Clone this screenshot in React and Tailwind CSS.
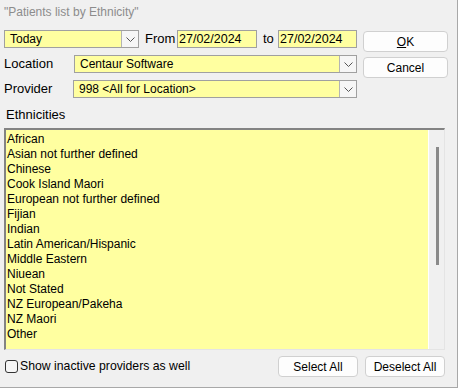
import React from 'react';

const ethnicities = [
  'African',
  'Asian not further defined',
  'Chinese',
  'Cook Island Maori',
  'European not further defined',
  'Fijian',
  'Indian',
  'Latin American/Hispanic',
  'Middle Eastern',
  'Niuean',
  'Not Stated',
  'NZ European/Pakeha',
  'NZ Maori',
  'Other',
];

const Chevron = () => (
  <svg width="9" height="5" viewBox="0 0 9 5" fill="none">
    <path d="M0.5 0.5 L4.5 4.5 L8.5 0.5" stroke="#555" strokeWidth="1" />
  </svg>
);

const Combo = ({ value, className }) => (
  <div className={`flex h-[18px] border border-[#a0a0a0] bg-[#ffffa0] ${className}`}>
    <div className="flex-1 flex items-center pl-[5px] text-[12px] text-black truncate">{value}</div>
    <div className="w-[17px] flex items-center justify-center border-l border-[#b4b4b4] bg-[#f6f6f6]">
      <Chevron />
    </div>
  </div>
);

const DateBox = ({ value, className }) => (
  <div className={`h-[18px] border border-[#a0a0a0] bg-[#ffffa0] flex items-center pl-[1px] text-[12.5px] text-black ${className}`}>
    {value}
  </div>
);

const Button = ({ children, className }) => (
  <button className={`h-[21px] rounded-[4px] border border-[#d0d0d0] bg-[#fdfdfd] text-[12px] text-black flex items-center justify-center ${className}`}>
    {children}
  </button>
);

export default function App() {
  return (
    <div className="w-[458px] h-[388px] bg-[#f0f0f0] border-r border-b border-[#a8a8a8] font-['Liberation_Sans',Arial,sans-serif] text-black flex flex-col">
      <div className="pl-[4px] pt-[4px] leading-[16px] text-[12px] text-[#8c8c8c]">"Patients list by Ethnicity"</div>

      <div className="flex mt-[10px] pl-[4px]">
        <div className="w-[353px] flex flex-col">
          <div className="flex items-center h-[18px]">
            <Combo value="Today" className="w-[135px]" />
            <span className="ml-[6px] w-[32px] text-[13px]">From</span>
            <DateBox value="27/02/2024" className="w-[80px]" />
            <span className="ml-[6px] w-[15px] text-[13px]">to</span>
            <DateBox value="27/02/2024" className="w-[79px]" />
          </div>
          <div className="flex items-center mt-[7px] h-[18px]">
            <span className="w-[70px] text-[13px]">Location</span>
            <Combo value="Centaur Software" className="w-[283px]" />
          </div>
          <div className="flex items-center mt-[7px] h-[18px]">
            <span className="w-[69px] text-[13px]">Provider</span>
            <Combo value="998 <All for Location>" className="w-[284px]" />
          </div>
        </div>
        <div className="ml-[6px] flex flex-col">
          <Button className="w-[85px] mt-[1px]">
            <span><u>O</u>K</span>
          </Button>
          <Button className="w-[85px] mt-[5px] h-[20px]">Cancel</Button>
        </div>
      </div>

      <div className="pl-[6px] mt-[9px] leading-[16px] text-[13px]">Ethnicities</div>

      <div className="ml-[4px] mt-[5px] w-[441px] h-[222px] flex border-t-2 border-l-2 border-[#838383] border-r border-b border-r-[#e4e4e4] border-b-[#e4e4e4]">
        <div className="flex-1 bg-[#ffffa0] pl-[1px] pt-[2px] text-[12px] leading-[15px]">
          {ethnicities.map((e) => (
            <div key={e}>{e}</div>
          ))}
        </div>
        <div className="w-[16px] bg-[#f0f0f0] border-l border-white flex justify-center pt-[17px]">
          <div className="w-[3px] h-[118px] bg-[#8a8a8a] ml-[1px]" />
        </div>
      </div>

      <div className="flex items-center mt-[6px] pl-[5px] h-[21px]">
        <div className="w-[13px] h-[13px] rounded-[3px] border border-[#333] bg-[#f6f6f6]" />
        <span className="ml-[2px] text-[12.25px]">Show inactive providers as well</span>
        <Button className="w-[80px] ml-auto">Select All</Button>
        <Button className="w-[80px] ml-[7px] mr-[12px]">Deselect All</Button>
      </div>
    </div>
  );
}
